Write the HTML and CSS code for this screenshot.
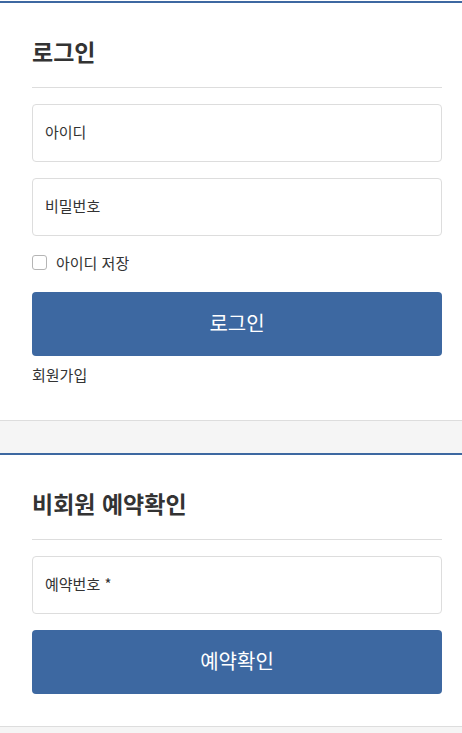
FILE: index.html
```html
<!DOCTYPE html>
<html lang="ko">
<head>
<meta charset="utf-8">
<title>로그인</title>
<link rel="stylesheet" href="styles.css">
</head>
<body>
<section class="panel">
  <h2 class="panel-title">로그인</h2>
  <form class="form">
    <input class="field" type="text" placeholder="아이디">
    <input class="field" type="password" placeholder="비밀번호">
    <label class="remember"><input class="check" type="checkbox"><span>아이디 저장</span></label>
    <button class="btn" type="button">로그인</button>
    <a class="join" href="#">회원가입</a>
  </form>
</section>
<div class="spacer"></div>
<section class="panel panel-last">
  <h2 class="panel-title">비회원 예약확인</h2>
  <form class="form">
    <input class="field" type="text" placeholder="예약번호 *">
    <button class="btn" type="button">예약확인</button>
  </form>
</section>
</body>
</html>
```
FILE: styles.css
```css
* { box-sizing: border-box; }
html, body { margin: 0; padding: 0; }
body {
  background: #f5f5f5;
  border-top: 1px solid #fff;
  font-family: "Noto Sans CJK KR", "Noto Sans", sans-serif;
  color: #333;
}
.panel {
  background: #fff;
  border-top: 2px solid #3d68a1;
  border-bottom: 1px solid #ddd;
  padding: 32px 20px 35px 32px;
}
.panel-last { padding-bottom: 32px; }
.spacer { height: 32px; }
.panel-title {
  margin: 0;
  font-size: 23px;
  line-height: 33px;
  font-weight: 700;
  color: #333;
  padding-bottom: 19px;
  border-bottom: 1px solid #ddd;
}
.form {
  display: flex;
  flex-direction: column;
  gap: 16px;
  margin-top: 16px;
}
.field {
  height: 58px;
  border: 1px solid #ddd;
  border-radius: 4px;
  padding: 0 12px 4px;
  font-family: inherit;
  font-size: 15px;
  color: #333;
  background: #fff;
  outline: none;
}
.field::placeholder { color: #333; }
.remember {
  display: flex;
  align-items: center;
  gap: 9px;
  height: 24px;
  margin: -2px 0 2px;
  font-size: 15px;
  color: #333;
}
.check {
  appearance: none;
  -webkit-appearance: none;
  margin: 0;
  width: 15px;
  height: 15px;
  border: 1px solid #b5b5b5;
  border-radius: 3px;
  background: #fff;
}
.btn {
  height: 64px;
  border: none;
  border-radius: 4px;
  background: #3d68a1;
  color: #fff;
  font-family: inherit;
  font-size: 20px;
  padding: 0 0 3px;
}
.join {
  margin-top: -8px;
  font-size: 15px;
  line-height: 21px;
  color: #333;
  text-decoration: none;
}
```
